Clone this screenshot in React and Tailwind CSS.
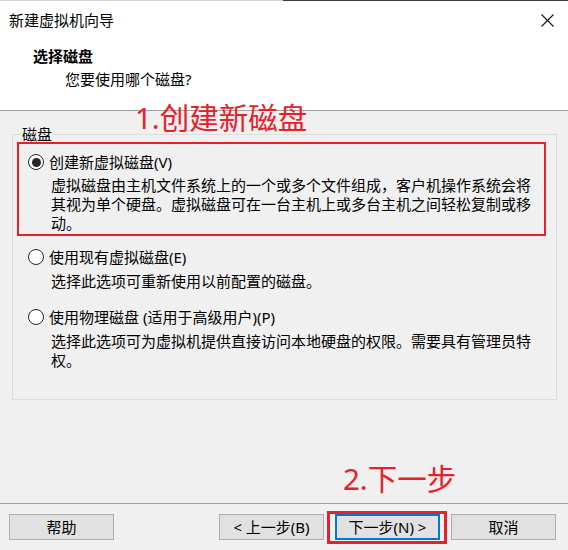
import React from "react";

function Radio({ checked }) {
  return (
    <span className="w-[16px] h-[16px] rounded-full border border-[#262626] bg-white flex items-center justify-center shrink-0">
      {checked ? <span className="w-[9px] h-[9px] rounded-full bg-[#262626]" /> : null}
    </span>
  );
}

function Btn({ children, primary }) {
  return (
    <div
      className={
        "w-[105px] h-[26px] bg-[#e1e1e1] flex items-center justify-center text-[15px] leading-[20px] text-black " +
        (primary ? "border-2 border-[#0078d7]" : "border border-[#adadad]")
      }
    >
      {children}
    </div>
  );
}

export default function App() {
  return (
    <div className="relative w-[568px] h-[550px] overflow-hidden bg-[#f0f0f0] flex flex-col text-black font-['Noto_Sans','Noto_Sans_CJK_SC',sans-serif]">
      {/* top window edge */}
      <div className="flex h-px shrink-0">
        <div className="w-[283px] bg-[#d4d4d4]" />
        <div className="flex-1 bg-[#3c3c3c]" />
      </div>

      {/* header */}
      <div className="h-[110px] shrink-0 bg-white border-b border-[#a0a0a0] flex flex-col">
        <div className="flex items-center justify-between pl-[9px] pr-[14px] pt-[9px]">
          <div className="text-[15px] leading-[20px]">新建虚拟机向导</div>
          <svg width="13" height="13" viewBox="0 0 13 13" className="block">
            <path d="M0.5 0.5 L12.5 12.5 M12.5 0.5 L0.5 12.5" stroke="#111" strokeWidth="1.1" fill="none" />
          </svg>
        </div>
        <div className="pl-[33px] mt-[16px] text-[15px] leading-[20px] font-bold">选择磁盘</div>
        <div className="pl-[65px] mt-[3px] text-[15px] leading-[20px]">您要使用哪个磁盘?</div>
      </div>

      {/* group box */}
      <fieldset className="mt-[15px] ml-[12px] w-[545px] border border-[#dcdcdc] pb-[29px] shrink-0">
        <legend className="ml-[7px] px-[2px] text-[15px] leading-[16px]">磁盘</legend>

        <div className="ml-[4px] w-[529px] h-[94px] border-2 border-[#e8202a] flex flex-col">
          <div className="flex items-center h-[20px] mt-[8px] pl-[9px]">
            <Radio checked />
            <span className="ml-[5px] text-[15px] leading-[20px] whitespace-nowrap">创建新虚拟磁盘(V)</span>
          </div>
          <div className="mt-[4px] pl-[32px] text-[15px] leading-[19px] whitespace-nowrap">
            <div>虚拟磁盘由主机文件系统上的一个或多个文件组成，客户机操作系统会将</div>
            <div>其视为单个硬盘。虚拟磁盘可在一台主机上或多台主机之间轻松复制或移</div>
            <div>动。</div>
          </div>
        </div>

        <div className="flex items-center h-[20px] mt-[11px] pl-[15px]">
          <Radio />
          <span className="ml-[5px] text-[15px] leading-[20px] whitespace-nowrap">使用现有虚拟磁盘(E)</span>
        </div>
        <div className="mt-[5px] pl-[38px] text-[15px] leading-[19px] whitespace-nowrap">
          选择此选项可重新使用以前配置的磁盘。
        </div>

        <div className="flex items-center h-[20px] mt-[16px] pl-[15px]">
          <Radio />
          <span className="ml-[5px] text-[15px] leading-[20px] whitespace-nowrap">使用物理磁盘 (适用于高级用户)(P)</span>
        </div>
        <div className="mt-[5px] pl-[38px] text-[15px] leading-[19px] whitespace-nowrap">
          <div>选择此选项可为虚拟机提供直接访问本地硬盘的权限。需要具有管理员特</div>
          <div>权。</div>
        </div>
      </fieldset>

      <div className="flex-1" />

      {/* bottom separator */}
      <div className="h-px bg-[#a0a0a0] shrink-0" />

      {/* buttons */}
      <div className="flex items-center pl-[9px] pr-[12px] mt-[10px] mb-[10px] shrink-0">
        <Btn>帮助</Btn>
        <div className="ml-auto flex gap-[11px]">
          <Btn>&lt; 上一步(B)</Btn>
          <Btn primary>下一步(N) &gt;</Btn>
          <Btn>取消</Btn>
        </div>
      </div>

      {/* annotations */}
      <div className="absolute left-[135px] top-[102px] text-[29.5px] leading-[32px] text-[#e8202a] whitespace-nowrap">
        1.创建新磁盘
      </div>
      <div className="absolute left-[343px] top-[463px] text-[29.5px] leading-[32px] text-[#e8202a] whitespace-nowrap">
        2.下一步
      </div>
      <div className="absolute left-[327px] top-[511px] w-[120px] h-[33px] border-[3px] border-[#e8202a]" />
    </div>
  );
}
